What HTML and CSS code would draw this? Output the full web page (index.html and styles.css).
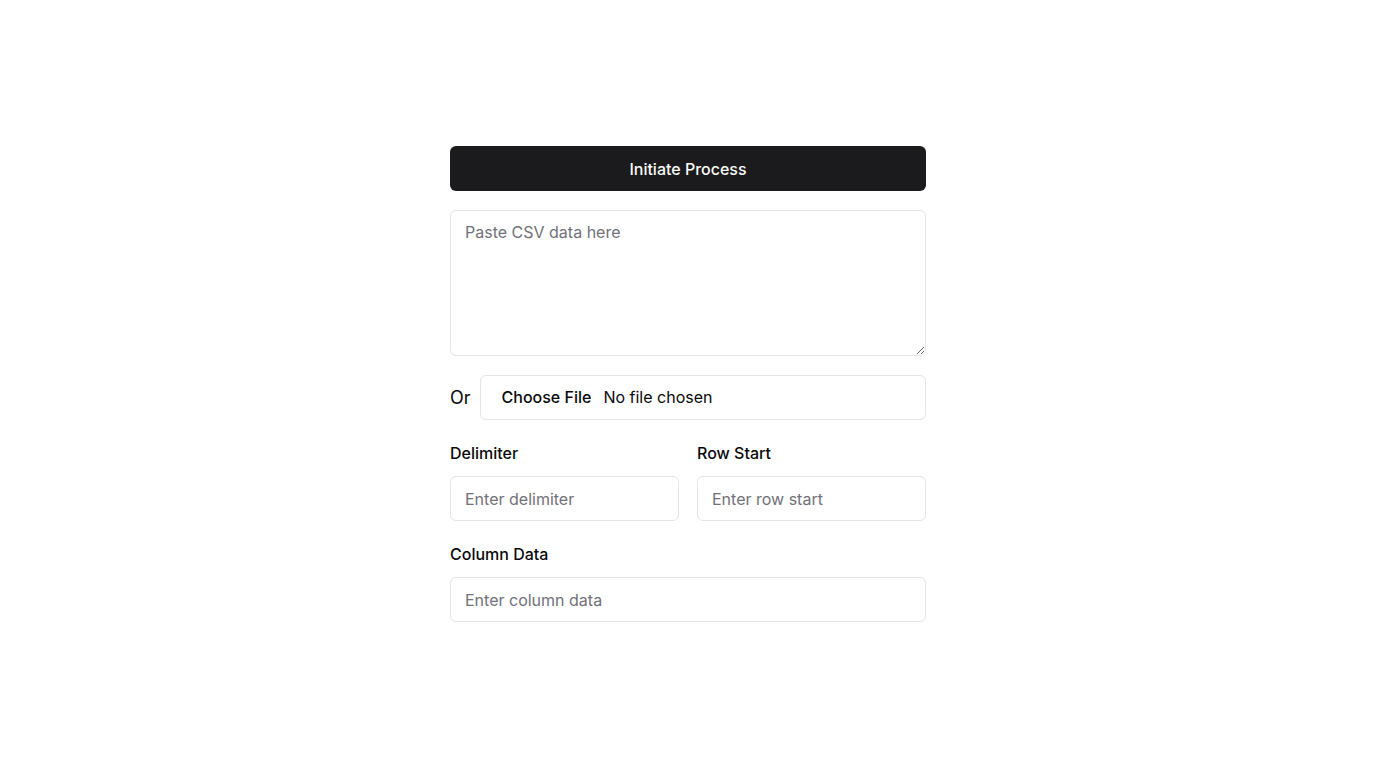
FILE: index.html
```html
<!DOCTYPE html>
<html lang="en">
<head>
<meta charset="utf-8">
<title>CSV Import</title>
<link rel="stylesheet" href="styles.css">
</head>
<body>
<main class="page">
  <form class="panel">
    <button type="button" class="primary-btn">Initiate Process</button>
    <textarea class="csv-area" placeholder="Paste CSV data here"></textarea>
    <div class="file-row">
      <span class="or-label">Or</span>
      <input type="file" class="file-input">
    </div>
    <div class="two-col">
      <div class="field">
        <label class="field-label">Delimiter</label>
        <input type="text" class="text-input" placeholder="Enter delimiter">
      </div>
      <div class="field">
        <label class="field-label">Row Start</label>
        <input type="text" class="text-input" placeholder="Enter row start">
      </div>
    </div>
    <div class="field field-spaced">
      <label class="field-label">Column Data</label>
      <input type="text" class="text-input" placeholder="Enter column data">
    </div>
  </form>
</main>
</body>
</html>
```

FILE: styles.css
```css
* { box-sizing: border-box; }
html, body { margin: 0; padding: 0; background: #ffffff; }
body {
  font-family: Inter, "Liberation Sans", sans-serif;
  color: #09090b;
  font-size: 16px;
}
.page {
  height: 768px;
  display: flex;
  align-items: center;
  justify-content: center;
}
.panel {
  width: 476px;
  display: flex;
  flex-direction: column;
  gap: 19px;
}
.primary-btn {
  height: 45px;
  border: none;
  border-radius: 6px;
  background: #1b1b1d;
  color: #fafafa;
  font: 500 16px Inter, "Liberation Sans", sans-serif;
  cursor: pointer;
}
.csv-area {
  height: 146px;
  border: 1px solid #e4e4e7;
  border-radius: 6px;
  padding: 9px 14px;
  font: 400 16px/24px Inter, "Liberation Sans", sans-serif;
  color: #09090b;
  resize: vertical;
  outline: none;
}
.csv-area::placeholder, .text-input::placeholder { color: #71717a; }
.file-row {
  display: flex;
  align-items: center;
  gap: 9px;
}
.or-label {
  font-size: 18px;
  line-height: 24px;
  padding-top: 1px;
  color: #09090b;
}
.file-input {
  flex: 1;
  height: 45px;
  border: 1px solid #e4e4e7;
  border-radius: 6px;
  padding: 9px 12px 0 21px;
  font: 400 16px/24px Inter, "Liberation Sans", sans-serif;
  color: #09090b;
}
.file-input::file-selector-button {
  border: none;
  background: transparent;
  padding: 0;
  margin-right: 12px;
  font: 500 16px Inter, "Liberation Sans", sans-serif;
  color: #09090b;
}
.two-col {
  display: grid;
  grid-template-columns: 1fr 1fr;
  gap: 18px;
  margin-top: 2px;
}
.field {
  display: flex;
  flex-direction: column;
  gap: 11px;
}
.field-spaced { margin-top: 2px; }
.field-label {
  font-size: 16px;
  font-weight: 500;
  line-height: 24px;
}
.text-input {
  height: 45px;
  width: 100%;
  border: 1px solid #e4e4e7;
  border-radius: 6px;
  padding: 0 14px;
  font: 400 16px Inter, "Liberation Sans", sans-serif;
  color: #09090b;
  outline: none;
}
```
